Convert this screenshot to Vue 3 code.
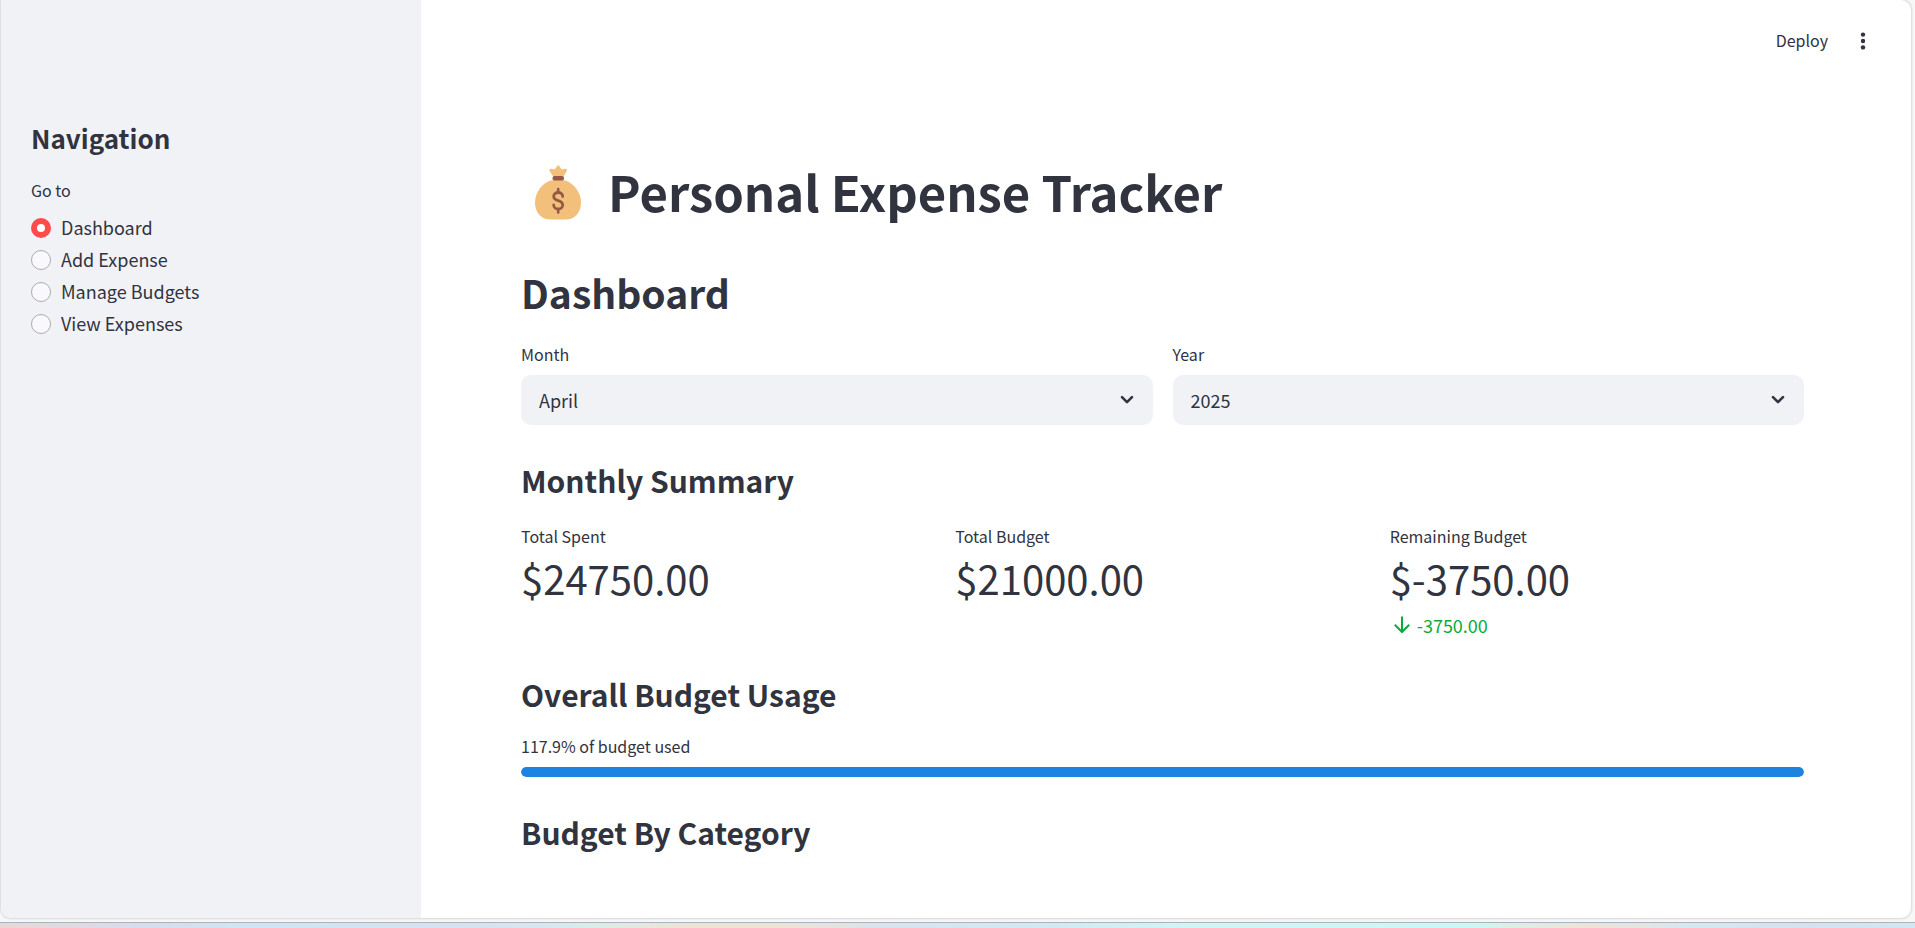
<script setup>
import { ref } from 'vue'

const pages = ['Dashboard', 'Add Expense', 'Manage Budgets', 'View Expenses']
const page = ref('Dashboard')
const months = [
  'January', 'February', 'March', 'April', 'May', 'June',
  'July', 'August', 'September', 'October', 'November', 'December',
]
const month = ref('April')
const years = [2023, 2024, 2025, 2026]
const year = ref(2025)
const metrics = [
  { label: 'Total Spent', value: '$24750.00' },
  { label: 'Total Budget', value: '$21000.00' },
  { label: 'Remaining Budget', value: '$-3750.00', delta: '-3750.00' },
]
const usage = 117.9
</script>

<template>
  <div class="desktop">
    <div class="app">
      <aside class="sidebar">
        <h2 class="nav-title">Navigation</h2>
        <fieldset class="nav">
          <legend class="label">Go to</legend>
          <label v-for="p in pages" :key="p" class="option">
            <input v-model="page" type="radio" name="page" :value="p" />
            <span>{{ p }}</span>
          </label>
        </fieldset>
      </aside>

      <main class="main">
        <header class="toolbar">
          <button type="button" class="deploy">Deploy</button>
          <button type="button" class="menu" aria-label="Main menu">
            <svg width="24" height="24" viewBox="0 0 24 24" fill="currentColor">
              <circle cx="12" cy="5.6" r="2.2" />
              <circle cx="12" cy="12" r="2.2" />
              <circle cx="12" cy="18.4" r="2.2" />
            </svg>
          </button>
        </header>

        <div class="content">
          <h1 class="title">
            <svg class="bag" width="46" height="58" viewBox="0 -3 46 58" aria-hidden="true">
              <path fill="#f3c07b" d="M18.500 12 14.600 6C14 4.500 15 3.300 16.600 3.800l3 .8L22.500.8c.5-.6 1.100-.6 1.600 0l2.600 3.800 3-.8c1.700-.5 2.700.8 2 2.400L28 12z" />
              <path fill="#f3c07b" d="M17.500 15h11C39 17.500 46 27.500 46 37.500 46 48 39.500 54.600 30 54.600H16C6.500 54.600 0 48 0 37.500 0 27.500 7 17.500 17.500 15z" />
              <rect x="17.500" y="11" width="11.500" height="4.500" rx="2" fill="#955a45" />
              <path fill="none" stroke="#955a45" stroke-width="2.600" stroke-linecap="round" d="M23.200 24v3.500M23.200 44v3.500" />
              <path fill="none" stroke="#955a45" stroke-width="2.800" stroke-linecap="round" d="M27.700 31.500c0-2.500-2-4-4.500-4s-4.500 1.500-4.500 4c0 2.300 1.700 3.200 4.500 4.100s4.500 2 4.500 4.400c0 2.500-2 4-4.500 4s-4.500-1.500-4.500-4" />
            </svg>
            <span>Personal Expense Tracker</span>
          </h1>

          <h2 class="section">Dashboard</h2>

          <div class="filters">
            <div class="field">
              <label class="label" for="month">Month</label>
              <div class="picker">
                <select id="month" v-model="month">
                  <option v-for="m in months" :key="m">{{ m }}</option>
                </select>
                <svg class="chevron" width="14" height="10" viewBox="0 0 14 10">
                  <path d="M2 2.200l5 5 5-5" />
                </svg>
              </div>
            </div>
            <div class="field">
              <label class="label" for="year">Year</label>
              <div class="picker">
                <select id="year" v-model="year">
                  <option v-for="y in years" :key="y" :value="y">{{ y }}</option>
                </select>
                <svg class="chevron" width="14" height="10" viewBox="0 0 14 10">
                  <path d="M2 2.200l5 5 5-5" />
                </svg>
              </div>
            </div>
          </div>

          <h3 class="subsection">Monthly Summary</h3>

          <div class="metrics">
            <div v-for="m in metrics" :key="m.label" class="metric">
              <div class="label">{{ m.label }}</div>
              <div class="value">{{ m.value }}</div>
              <div v-if="m.delta" class="delta">
                <svg width="20" height="20" viewBox="0 0 20 20" aria-hidden="true">
                  <path d="M10 1.500v15.500M2.800 9.800l7.200 7.200 7.200-7.200" />
                </svg>
                <span>{{ m.delta }}</span>
              </div>
            </div>
          </div>

          <h3 class="subsection">Overall Budget Usage</h3>
          <div id="usage" class="label">{{ usage }}% of budget used</div>
          <div
            class="track"
            role="progressbar"
            aria-labelledby="usage"
            :aria-valuenow="Math.min(usage, 100)"
          >
            <div class="fill" :style="{ width: Math.min(usage, 100) + '%' }"></div>
          </div>

          <h3 class="subsection">Budget By Category</h3>
        </div>
      </main>
    </div>
    <div class="wallpaper"></div>
  </div>
</template>

<style>
body {
  margin: 0;
  background: #f7f7f7;
}
</style>

<style scoped>
.desktop {
  display: flex;
  flex-direction: column;
  min-height: 100vh;
  color: #31333f;
  font-family: "Noto Sans CJK SC", "Noto Sans", sans-serif;
  font-size: 18px;
}
.desktop * {
  box-sizing: border-box;
}
.app {
  display: flex;
  flex: 1;
  margin: 0 4px 4px 1px;
  overflow: hidden;
  background: #fff;
  border-radius: 0 10px 10px 10px;
  box-shadow: 0 0 2px 1px #d8d8d8;
}
.sidebar {
  flex: none;
  width: 420px;
  padding: 120px 30px 30px;
  background: #f0f2f6;
}
.nav-title {
  margin: 0 0 21px;
  font-size: 26px;
  font-weight: 600;
  line-height: 36px;
}
.nav {
  margin: 0;
  padding: 0;
  border: 0;
}
.label {
  display: block;
  padding: 0;
  font-size: 16px;
  line-height: 26px;
}
.nav .label {
  margin-bottom: 9px;
}
.option {
  display: flex;
  align-items: center;
  gap: 10px;
  height: 32px;
  line-height: 30px;
}
.option span {
  padding-bottom: 2px;
}
.option input {
  width: 20px;
  height: 20px;
  margin: 0;
  appearance: none;
  background: #f9f9fb;
  border: 1px solid #a9abb3;
  border-radius: 50%;
}
.option input:checked {
  background: #fff;
  border: 6px solid #ff4b4b;
}
.main {
  flex: 1;
  min-width: 0;
}
.toolbar {
  display: flex;
  align-items: center;
  justify-content: flex-end;
  gap: 23px;
  height: 81px;
  padding-right: 36px;
}
.deploy,
.menu {
  padding: 0;
  background: none;
  border: 0;
  color: inherit;
  font: inherit;
  font-size: 16px;
  line-height: 26px;
}
.deploy {
  padding-bottom: 2px;
}
.menu {
  display: flex;
}
.content {
  padding: 77px 107px 14px 100px;
}
.title {
  display: flex;
  align-items: center;
  gap: 27px;
  margin: 0 0 41px;
  padding-left: 14px;
  font-size: 49px;
  font-weight: 700;
  line-height: 66px;
}
.section {
  margin: 0 0 22px;
  font-size: 39px;
  font-weight: 600;
  line-height: 54px;
}
.subsection {
  margin: 34px 0 18px;
  font-size: 30px;
  font-weight: 600;
  line-height: 42px;
}
.filters {
  display: grid;
  grid-template-columns: 1fr 1fr;
  gap: 20px;
}
.picker {
  display: grid;
  align-items: center;
  margin-top: 8px;
}
.picker select {
  grid-area: 1 / 1;
  width: 100%;
  height: 50px;
  padding: 0 48px 0 18px;
  appearance: none;
  background: #f0f2f6;
  border: 0;
  border-radius: 10px;
  color: inherit;
  font: inherit;
}
.chevron {
  grid-area: 1 / 1;
  justify-self: end;
  margin-right: 19px;
  pointer-events: none;
}
.chevron path {
  fill: none;
  stroke: #31333f;
  stroke-width: 2.6;
  stroke-linecap: round;
  stroke-linejoin: round;
}
.metrics {
  display: grid;
  grid-template-columns: repeat(3, 1fr);
  gap: 20px;
  padding-top: 4px;
}
.value {
  margin: 2px 0 5px;
  font-size: 40px;
  line-height: 55px;
}
.delta {
  display: flex;
  align-items: center;
  gap: 5px;
  padding-left: 2px;
  color: #09ab3b;
  line-height: 28px;
}
.delta path {
  fill: none;
  stroke: currentColor;
  stroke-width: 2;
}
.track {
  height: 10px;
  margin-top: 8px;
  overflow: hidden;
  background: #f0f2f6;
  border-radius: 5px;
}
.fill {
  height: 100%;
  background: #1c83e1;
  border-radius: 5px;
}
.wallpaper {
  height: 6px;
  border-top: 1px solid #a9b4bf;
  background: linear-gradient(90deg, #ecd6d8 0%, #d8dcea 7%, #d1e4f3 13%, #d6e2ef 24%, #d8e6ef 28%, #d9ede9 31%, #f2e2d3 36%, #f2e2d3 41%, #d8e3ee 46%, #d3e9f2 55%, #d0f5f5 62%, #ccf7f5 77%, #ddeee6 79%, #f3e1d5 83%, #d6e8ef 88%, #d6e1ee 94%, #d3e6f1 100%);
}
</style>
